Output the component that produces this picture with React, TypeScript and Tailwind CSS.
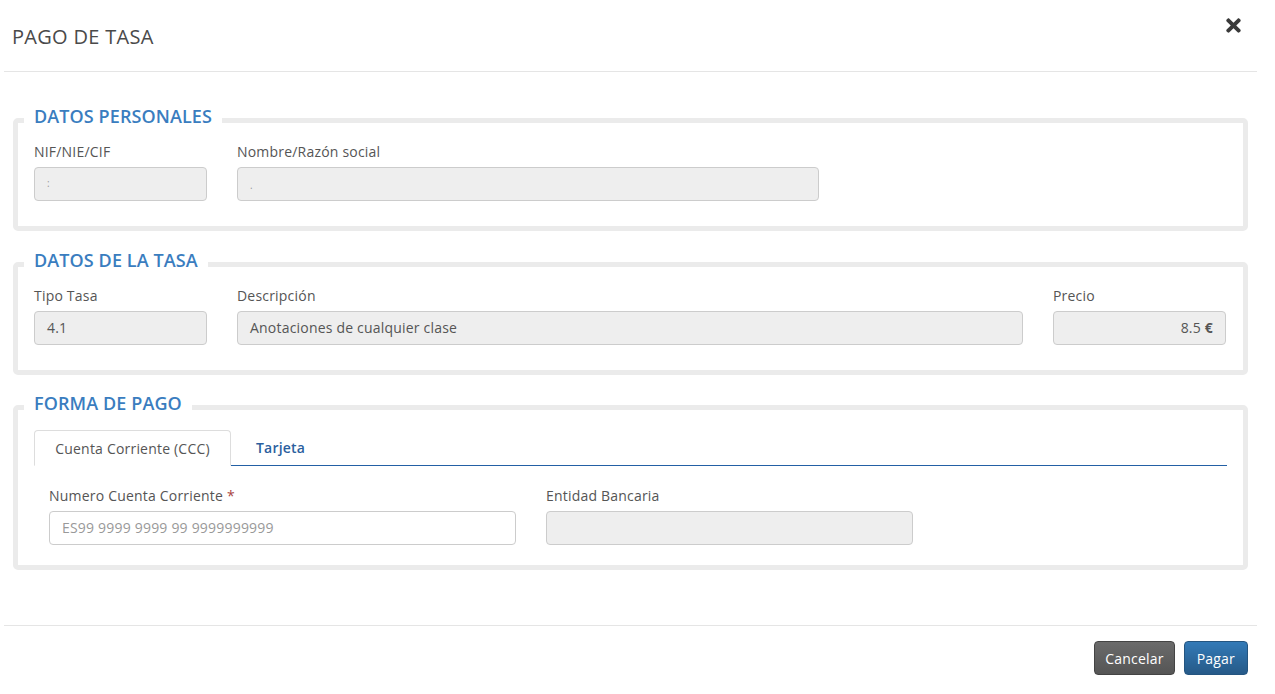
import { FaTimes } from "react-icons/fa";

const font = { fontFamily: '"Open Sans", "Liberation Sans", sans-serif' };

function Section({ title, children, className = "" }: { title: string; children: React.ReactNode; className?: string }) {
  return (
    <fieldset className={`ml-[9px] w-[1235px] border-[5px] border-[#ebebeb] rounded-[5px] ${className}`}>
      <legend className="ml-[6px] px-[10px] pb-[9px] text-[18px] leading-[20px] tracking-[0.1px] font-semibold text-[#3a7dbf]">
        {title}
      </legend>
      {children}
    </fieldset>
  );
}

function Field({ label, width, value, align = "left", children }: { label: string; width: string; value?: string; align?: "left" | "right"; children?: React.ReactNode }) {
  return (
    <div className={width}>
      <div className="text-[14px] leading-[20px] text-[#555]">{label}</div>
      <div
        className={`mt-[5px] h-[34px] px-[12px] pb-[2px] flex items-center rounded-[4px] border border-[#ccc] bg-[#eee] text-[14px] text-[#555] ${
          align === "right" ? "justify-end" : ""
        }`}
      >
        {children ?? value}
      </div>
    </div>
  );
}

export default function App() {
  return (
    <div className="w-[1275px] h-[694px] bg-white tracking-[0.2px]" style={font}>
      <div className="ml-[4px] w-[1253px]">
        {/* header */}
        <div className="h-[72px] border-b border-[#e5e5e5] flex items-start justify-between px-[8px]">
          <h4 className="mt-[24px] text-[20px] leading-[26px] tracking-[0.3px] text-[#4a4a4a]">PAGO DE TASA</h4>
          <FaTimes className="mt-[15px] mr-[5px] text-[#3a3a3a]" size={21} />
        </div>

        <div className="pt-[34px]">
          <Section title="DATOS PERSONALES">
            <div className="flex gap-[30px] pl-[16px] pt-[7px] pb-[25px]">
              <Field label="NIF/NIE/CIF" width="w-[173px]">
                <span className="text-[10px] text-[#999]">:</span>
              </Field>
              <Field label="Nombre/Razón social" width="w-[582px]">
                <span className="text-[10px] text-[#999] pt-[4px]">.</span>
              </Field>
            </div>
          </Section>

          <Section title="DATOS DE LA TASA" className="mt-[19px]">
            <div className="flex gap-[30px] pl-[16px] pt-[7px] pb-[25px]">
              <Field label="Tipo Tasa" width="w-[173px]" value="4.1" />
              <Field label="Descripción" width="w-[786px]" value="Anotaciones de cualquier clase" />
              <Field label="Precio" width="w-[173px]" align="right">
                <span>
                  8.5 <span className="font-bold">€</span>
                </span>
              </Field>
            </div>
          </Section>

          <Section title="FORMA DE PAGO" className="mt-[18px]">
            <div className="px-[16px] pt-[8px] pb-[20px]">
              {/* tabs */}
              <div className="flex items-end h-[36px] border-b border-[#2360a5]">
                <div className="w-[197px] h-[36px] -mb-px flex items-center justify-center rounded-t-[4px] border border-[#ddd] border-b-white bg-white text-[14px] text-[#555]">
                  Cuenta Corriente (CCC)
                </div>
                <div className="h-[35px] flex items-center pl-[25px] text-[14px] font-semibold text-[#2b5f9e]">Tarjeta</div>
              </div>

              <div className="flex gap-[30px] pl-[15px] pt-[20px]">
                <div className="w-[467px]">
                  <div className="text-[14px] leading-[20px] text-[#555]">
                    Numero Cuenta Corriente <span className="text-[#a94442]">*</span>
                  </div>
                  <div className="mt-[5px] h-[34px] px-[12px] pb-[2px] flex items-center rounded-[4px] border border-[#ccc] bg-white text-[14px] text-[#999]">
                    ES99 9999 9999 99 9999999999
                  </div>
                </div>
                <Field label="Entidad Bancaria" width="w-[367px]" />
              </div>
            </div>
          </Section>
        </div>

        {/* footer */}
        <div className="mt-[55px] border-t border-[#e5e5e5] pt-[15px] flex justify-end gap-[9px] pr-[9px]">
          <button className="h-[34px] px-[10px] rounded-[4px] border border-[#444] bg-gradient-to-b from-[#6b6b6b] to-[#555] text-[14px] text-white">
            Cancelar
          </button>
          <button className="h-[34px] px-[12px] rounded-[4px] border border-[#245580] bg-gradient-to-b from-[#337ab7] to-[#265a88] text-[14px] text-white">
            Pagar
          </button>
        </div>
      </div>
    </div>
  );
}
